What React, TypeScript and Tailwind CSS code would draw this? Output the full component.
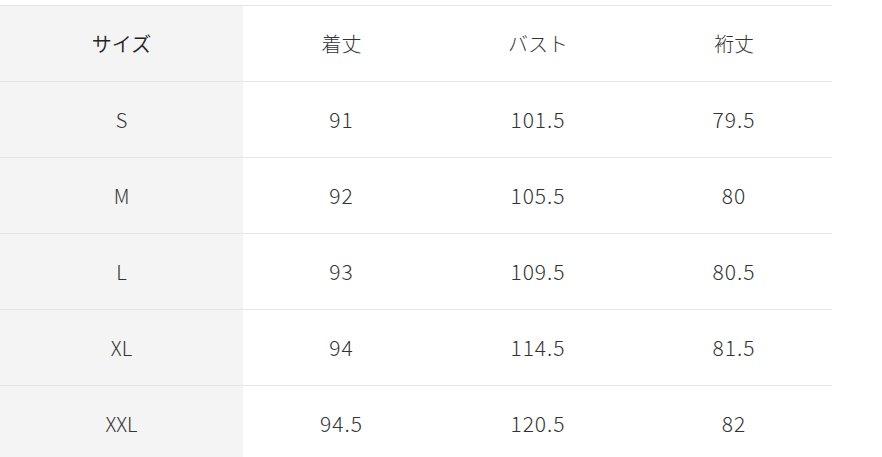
const headers = ["サイズ", "着丈", "バスト", "裄丈"];

const rows = [
  ["S", "91", "101.5", "79.5"],
  ["M", "92", "105.5", "80"],
  ["L", "93", "109.5", "80.5"],
  ["XL", "94", "114.5", "81.5"],
  ["XXL", "94.5", "120.5", "82"],
];

const cols = "grid grid-cols-[243px_197px_196px_196px]";

export default function App() {
  return (
    <div
      className="w-[882px] h-[457px] overflow-hidden bg-white pt-[5px]"
      style={{ fontFamily: '"Noto Sans CJK JP", "Noto Sans", sans-serif' }}
    >
      <div className="w-[832px] border-t border-[#e5e5e5]">
        {/* header row */}
        <div className={`${cols} h-[76px] border-b border-[#e5e5e5]`}>
          {headers.map((h, i) => (
            <div
              key={h}
              className={`flex items-center justify-center text-[20px] ${
                i === 0 ? "bg-[#f4f4f4] text-[#222] font-[350]" : "text-[#333] font-light"
              }`}
            >
              {h}
            </div>
          ))}
        </div>

        {rows.map((r) => (
          <div key={r[0]} className={`${cols} h-[76px] border-b border-[#e5e5e5]`}>
            {r.map((c, i) => (
              <div
                key={i}
                className={`flex items-center justify-center font-light text-[#333] ${
                  i === 0 ? "bg-[#f4f4f4] text-[20px]" : "text-[21px] tracking-[1px]"
                }`}
              >
                {c}
              </div>
            ))}
          </div>
        ))}
      </div>
    </div>
  );
}
